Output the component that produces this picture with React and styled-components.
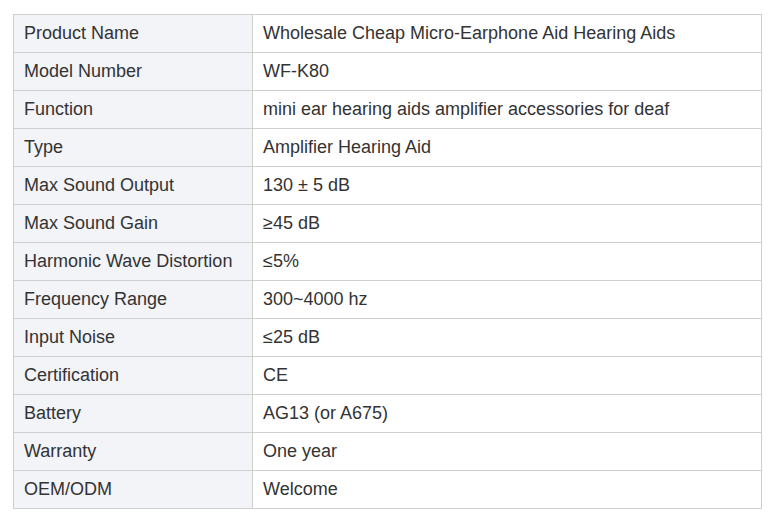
import styled, { createGlobalStyle } from 'styled-components'

const GlobalStyle = createGlobalStyle`
    body {
        margin: 0;
        background: #fff;
        font-family: "Liberation Sans", Arial, sans-serif;
    }
`

const Wrapper = styled.div`
    padding: 14px 13px;
`

const Table = styled.table`
    width: 749px;
    border-collapse: collapse;
    table-layout: fixed;
    font-size: 18px;
    color: #333;

    td {
        height: 38px;
        padding: 0 10px 2px;
        border: 1px solid #cfcfcf;
        box-sizing: border-box;
        white-space: nowrap;
        line-height: 1;
    }
`

const Label = styled.td`
    width: 239px;
    background: #f2f4f8;
`

const Value = styled.td`
    background: #fff;
`

const specs = [
    ['Product Name', 'Wholesale Cheap Micro-Earphone Aid Hearing Aids'],
    ['Model Number', 'WF-K80'],
    ['Function', 'mini ear hearing aids amplifier accessories for deaf'],
    ['Type', 'Amplifier Hearing Aid'],
    ['Max Sound Output', '130 ± 5 dB'],
    ['Max Sound Gain', '≥45 dB'],
    ['Harmonic Wave Distortion', '≤5%'],
    ['Frequency Range', '300~4000 hz'],
    ['Input Noise', '≤25 dB'],
    ['Certification', 'CE'],
    ['Battery', 'AG13 (or A675)'],
    ['Warranty', 'One year'],
    ['OEM/ODM', 'Welcome'],
]

export default function App() {
    return (
        <Wrapper>
            <GlobalStyle />
            <Table>
                <colgroup>
                    <col style={{ width: 239 }} />
                    <col />
                </colgroup>
                <tbody>
                    {specs.map(([label, value]) => (
                        <tr key={label}>
                            <Label>{label}</Label>
                            <Value>{value}</Value>
                        </tr>
                    ))}
                </tbody>
            </Table>
        </Wrapper>
    )
}
